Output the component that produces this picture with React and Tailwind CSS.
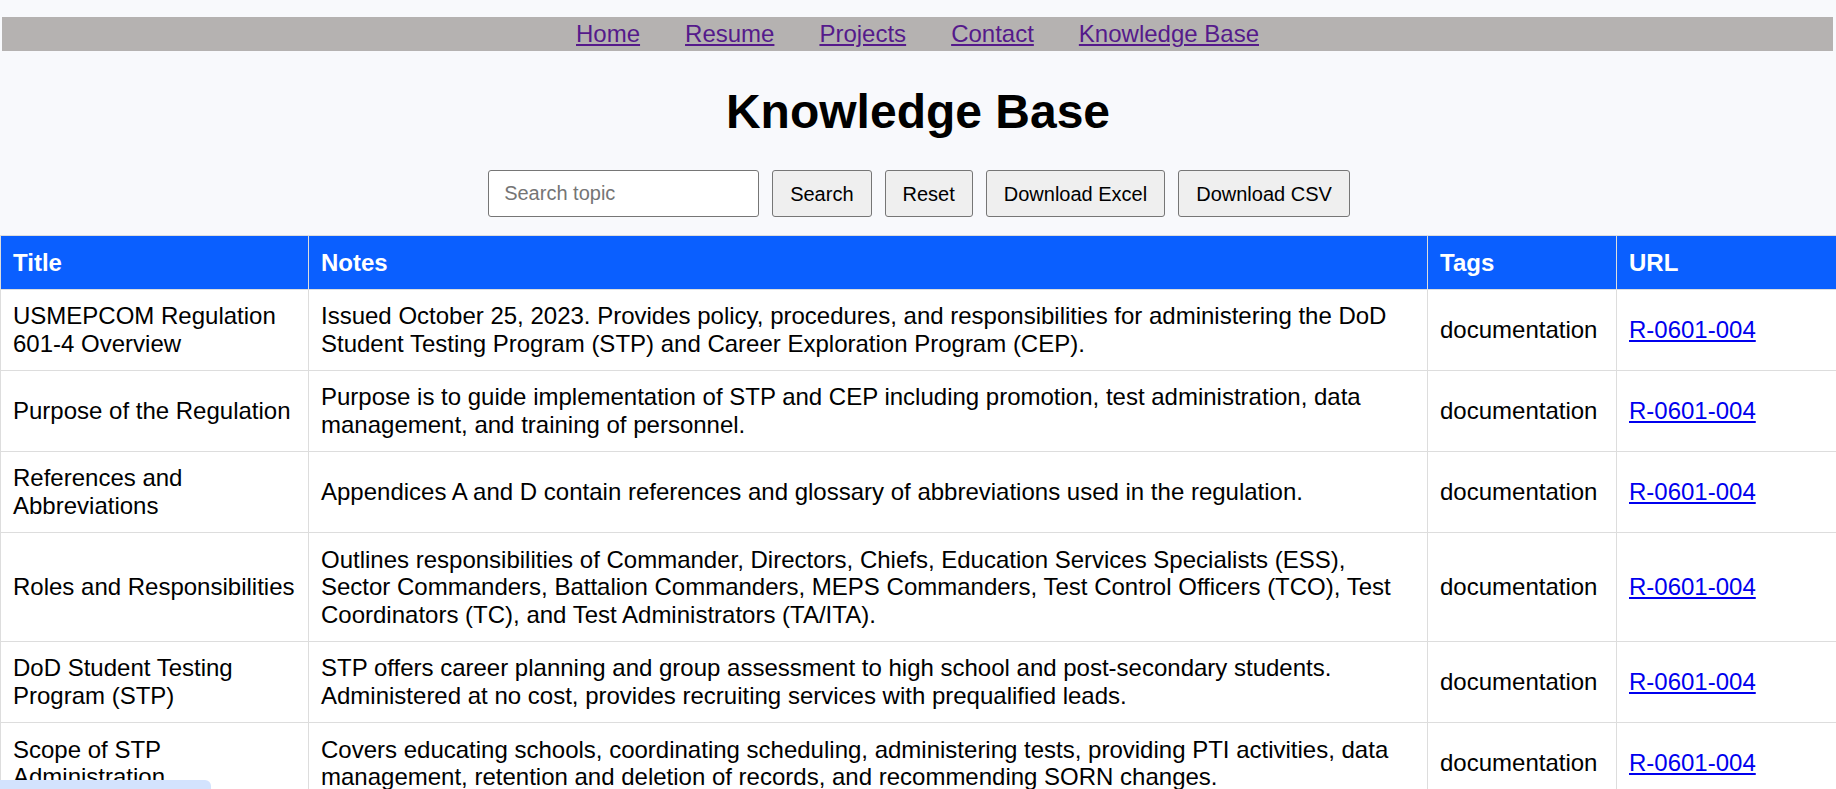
import React from "react";

const navLinks = ["Home", "Resume", "Projects", "Contact", "Knowledge Base"];

const entries = [
  {
    title: "USMEPCOM Regulation 601-4 Overview",
    notes:
      "Issued October 25, 2023. Provides policy, procedures, and responsibilities for administering the DoD Student Testing Program (STP) and Career Exploration Program (CEP).",
  },
  {
    title: "Purpose of the Regulation",
    notes:
      "Purpose is to guide implementation of STP and CEP including promotion, test administration, data management, and training of personnel.",
  },
  {
    title: "References and Abbreviations",
    notes:
      "Appendices A and D contain references and glossary of abbreviations used in the regulation.",
  },
  {
    title: "Roles and Responsibilities",
    notes:
      "Outlines responsibilities of Commander, Directors, Chiefs, Education Services Specialists (ESS), Sector Commanders, Battalion Commanders, MEPS Commanders, Test Control Officers (TCO), Test Coordinators (TC), and Test Administrators (TA/ITA).",
  },
  {
    title: "DoD Student Testing Program (STP)",
    notes:
      "STP offers career planning and group assessment to high school and post-secondary students. Administered at no cost, provides recruiting services with prequalified leads.",
  },
  {
    title: "Scope of STP Administration",
    notes:
      "Covers educating schools, coordinating scheduling, administering tests, providing PTI activities, data management, retention and deletion of records, and recommending SORN changes.",
  },
  {
    title: "Career Exploration Program (CEP)",
    notes:
      "CEP helps students explore career options using ASVAB results and interest inventories.",
  },
];

export default function App() {
  return (
    <div className="min-h-screen bg-[#f8f9fc] pt-[17px] font-['Liberation_Sans',Arial,sans-serif] text-black">
      {/* Nav */}
      <nav className="ml-[2px] mr-[3px] h-[34px] bg-[#b5b2b1] flex items-center justify-center gap-[45px] text-[24px] leading-[27.6px]">
        {navLinks.map((link) => (
          <a key={link} href="#" className="text-[#551a8b] underline">
            {link}
          </a>
        ))}
      </nav>

      {/* Heading */}
      <h1 className="mt-[33px] mb-[31px] text-center text-[48px] leading-[55px] font-bold">
        Knowledge Base
      </h1>

      {/* Controls */}
      <div className="flex justify-center gap-[13px] h-[47px] pl-[2px]">
        <input
          type="text"
          placeholder="Search topic"
          className="w-[271px] h-[47px] bg-white border border-[#767676] rounded-[3px] px-[15px] text-[20px] placeholder:text-[#757575] outline-none"
        />
        {["Search", "Reset", "Download Excel", "Download CSV"].map((label) => (
          <button
            key={label}
            className="h-[47px] px-[17px] bg-[#efefef] border border-[#767676] rounded-[3px] text-[20px] text-black"
          >
            {label}
          </button>
        ))}
      </div>

      {/* Table */}
      <table className="mt-[18px] w-full table-fixed border-collapse text-[24px] leading-[27.6px]">
        <colgroup>
          <col className="w-[308px]" />
          <col className="w-[1119px]" />
          <col className="w-[189px]" />
          <col className="w-[220px]" />
        </colgroup>
        <thead>
          <tr>
            {["Title", "Notes", "Tags", "URL"].map((h) => (
              <th
                key={h}
                className="bg-[#0a5fff] text-white font-bold text-left px-[12px] py-[12.5px] border border-[#dddddd]"
              >
                {h}
              </th>
            ))}
          </tr>
        </thead>
        <tbody>
          {entries.map((row) => (
            <tr key={row.title}>
              <td className="bg-white px-[12px] py-[12.5px] border border-[#dddddd] align-middle">
                {row.title}
              </td>
              <td className="bg-white px-[12px] py-[12.5px] border border-[#dddddd] align-middle">
                {row.notes}
              </td>
              <td className="bg-white px-[12px] py-[12.5px] border border-[#dddddd] align-middle">
                documentation
              </td>
              <td className="bg-white px-[12px] py-[12.5px] border border-[#dddddd] align-middle">
                <a href="#" className="text-[#0000ee] underline">
                  R-0601-004
                </a>
              </td>
            </tr>
          ))}
        </tbody>
      </table>

      {/* status bubble */}
      <div className="fixed bottom-0 left-0 w-[211px] h-[9px] bg-[#d3e3fd] rounded-tr-[6px]" />
    </div>
  );
}
